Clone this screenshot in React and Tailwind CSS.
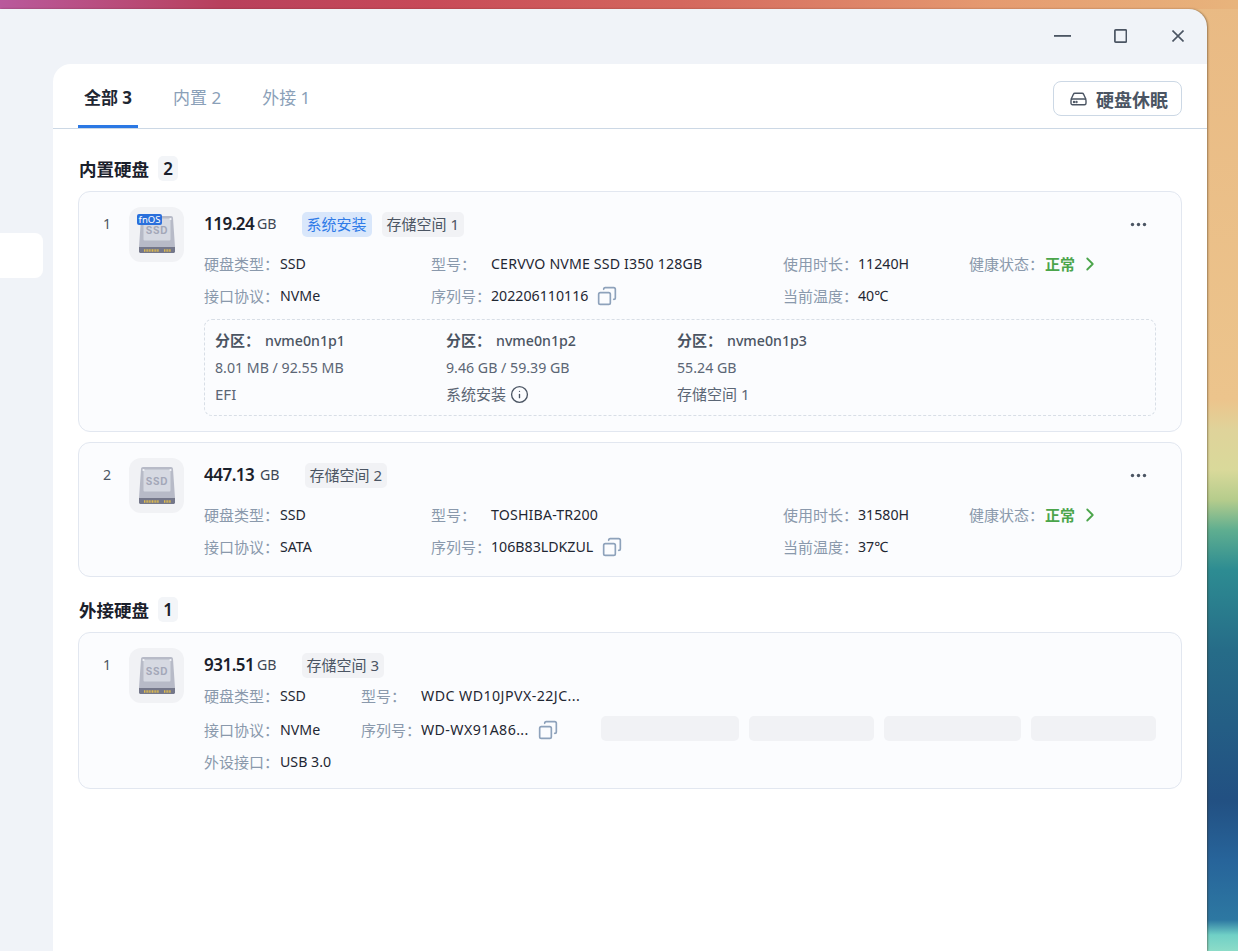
import React from 'react';
import { Copy, Info, ChevronRight } from 'lucide-react';

const SsdIcon = ({ fnos }) => (
  <div className="relative w-[55px] h-[55px] rounded-xl bg-[#f1f2f5] shrink-0 flex items-center justify-center">
    <svg width="36" height="37" viewBox="0 0 36 37">
      <path d="M2 2C2 .9 2.900 0 4 0h28c1.100 0 2 .9 2 2l2 29H0z" fill="#b7bac7" />
      <rect x="4.500" y="2.500" width="27" height="22" rx="1" fill="#d6d9e2" />
      <circle cx="31.500" cy="3" r="1.100" fill="#f2f3f7" />
      <circle cx="4.500" cy="3" r="1.100" fill="#f2f3f7" />
      <text x="18" y="18" textAnchor="middle" fontSize="10" fontWeight="700" fill="#a3a7b8" letterSpacing="0.8" fontFamily="Inter, sans-serif">SSD</text>
      <path d="M0 31h36v4.500c0 .8-.7 1.500-1.500 1.500h-33C.7 37 0 36.300 0 35.500z" fill="#74778a" />
      <path d="M5 34.500h15M25 34.500h7" stroke="#e0bb4c" strokeWidth="2.500" strokeDasharray="1 0.600" fill="none" />
    </svg>
    {fnos && (
      <span className="absolute left-[8px] top-[7px] w-[25px] h-[11px] rounded-[2px] bg-[#2a6fdb] text-white text-[9.5px] leading-[11px] text-center">fnOS</span>
    )}
  </div>
);

const Field = ({ label, value, width, labelWidth, copy, valueClass = '', children }) => (
  <div className="flex items-center shrink-0" style={{ width }}>
    <span className="text-[15px] text-[#8a99ac] shrink-0" style={{ width: labelWidth }}>{label}</span>
    {value && <span className={`text-[#1f2733] whitespace-nowrap ${valueClass}`}>{value}</span>}
    {copy && <Copy size={20} strokeWidth={2} className="ml-[9px] text-[#8ea2bb] scale-x-[-1]" />}
    {children}
  </div>
);

const Tag = ({ children, blue }) => (
  <span className={`h-[25px] px-[5px] rounded-[5px] text-[15px] leading-[25px] ${blue ? 'bg-[#d9e7fb] text-[#2f7be8]' : 'bg-[#f1f2f5] text-[#4b5563]'}`}>
    {children}
  </span>
);

const Health = () => (
  <Field label="健康状态：" labelWidth={76} width={187}>
    <span className="text-[15px] font-bold text-[#4ba54b]">正常</span>
    <ChevronRight size={22} strokeWidth={2} className="ml-[4px] text-[#4ba54b]" />
  </Field>
);

const Dots = () => (
  <svg className="ml-auto mr-[9px]" width="17" height="5" viewBox="0 0 17 5" fill="#4b5563">
    <circle cx="2.500" cy="2.500" r="1.700" />
    <circle cx="8.500" cy="2.500" r="1.700" />
    <circle cx="14.500" cy="2.500" r="1.700" />
  </svg>
);

const Head = ({ size, gb, children, dots = true }) => (
  <div className="flex items-center h-[34px]">
    <span className="w-[49px] text-[17px] tracking-[-0.5px] font-semibold text-[#1a202b] whitespace-nowrap">{size}</span>
    <span className="text-[#3f4855]" style={{ marginLeft: gb }}>GB</span>
    <div className="ml-[25px] flex items-center gap-[10px]">{children}</div>
    {dots && <Dots />}
  </div>
);

const Card = ({ index, fnos, pb, children }) => (
  <div className="flex border border-[#e2e7f0] rounded-xl bg-[#fbfcfe] pt-[15px] pr-[25px]" style={{ paddingBottom: pb }}>
    <div className="w-[50px] h-[34px] pl-[24px] leading-[34px] text-[#4b5563] shrink-0">{index}</div>
    <SsdIcon fnos={fnos} />
    <div className="flex-1 ml-[20px] min-w-0">{children}</div>
  </div>
);

const Section = ({ title, count }) => (
  <div className="flex items-center h-[25px] mb-[10px]">
    <span className="ml-px mt-[2px] text-[17.5px] leading-[25px] font-bold text-[#1a202b]">{title}</span>
    <span className="ml-[9px] w-[20px] h-[25px] rounded-[5px] bg-[#f3f5f8] text-center text-[17px] leading-[25px] font-semibold text-[#1a202b]">{count}</span>
  </div>
);

const Partition = ({ name, used, kind, info }) => (
  <div className="w-[231px] shrink-0">
    <div className="h-[27px] leading-[27px] flex items-center text-[#4b5563]">
      <span className="w-[50px] text-[15px] font-bold">分区：</span>
      <span className="font-medium">{name}</span>
    </div>
    <div className="h-[27px] leading-[27px] text-[#5b6675]">{used}</div>
    <div className="h-[27px] flex items-center text-[15px] text-[#5b6675]">
      {kind}
      {info && <Info size={19} strokeWidth={1.7} className="ml-[4px] text-[#4b5563]" />}
    </div>
  </div>
);

const App = () => (
  <div className="w-[1238px] h-[951px] overflow-hidden flex flex-col text-[14.2px] font-['Noto_Sans','Noto_Sans_CJK_SC',sans-serif] bg-[linear-gradient(to_bottom,#e9ba84_0px,#ecc48c_400px,#dfd39a_430px,#d9d99a_470px,#b5cc8c_500px,#5fae90_530px,#2d8c92_570px,#266c88_650px,#225082_800px,#27649a_860px,#2d78a2_920px,#70d0c6_935px,#8cdcc8_951px)]">
    <div className="h-[9px] shrink-0 bg-[linear-gradient(to_right,#b9599c_0%,#b8405c_18%,#c84a58_35%,#d4685e_55%,#e59a70_80%,#e8b47c_100%)]" />

    <div className="w-[1207px] flex-1 min-h-0 flex flex-col rounded-tr-[18px] bg-[#f0f3f8] shadow-[1px_0_2px_rgba(60,40,20,0.45)]">
      {/* title bar */}
      <div className="h-[55px] shrink-0 flex items-center justify-end pb-[1px] text-[#4b5563]">
        <svg width="17" height="2" viewBox="0 0 17 2" className="mr-[43px]"><rect width="17" height="1.800" fill="currentColor" /></svg>
        <svg width="13" height="14" viewBox="0 0 13 14" className="mr-[45px]"><rect x="0.900" y="0.900" width="11.500" height="12.200" rx="0.800" fill="none" stroke="currentColor" strokeWidth="1.700" /></svg>
        <svg width="12" height="12" viewBox="0 0 12 12" className="mr-[23px]"><path d="M.5.500l11 11M11.500.500l-11 11" fill="none" stroke="currentColor" strokeWidth="1.600" /></svg>
      </div>

      <div className="flex-1 min-h-0 flex">
        {/* collapsed sidebar */}
        <div className="w-[53px] shrink-0 pt-[169px]">
          <div className="w-[43px] h-[45px] bg-white rounded-r-lg" />
        </div>

        <div className="flex-1 bg-white rounded-tl-[18px]">
          {/* tabs */}
          <div className="h-[65px] border-b border-[#ccd8e5] flex px-[25px]">
            <div className="w-[60px] h-[64px] border-b-[3px] border-[#2b78e4] pt-[21px] text-center text-[17px] leading-[25px] font-bold text-[#1f2733]">全部 3</div>
            <div className="ml-[35px] pt-[21px] text-[17px] leading-[25px] text-[#8aa0b8]">内置 2</div>
            <div className="ml-[41px] pt-[21px] text-[17px] leading-[25px] text-[#8aa0b8]">外接 1</div>
            <div className="ml-auto mt-[17px] w-[129px] h-[35px] border border-[#ccd8e5] rounded-lg flex items-center pl-[16px] text-[#4b5563]">
              <svg width="17" height="14" viewBox="0 0 17 14" fill="none" stroke="currentColor" strokeWidth="1.400">
                <path d="M1 7.500L3.400 2.200C3.700 1.500 4.200 1.200 4.900 1.200h7.200c.7 0 1.200.3 1.500 1L16 7.500" />
                <rect x="1" y="7" width="15" height="5.800" rx="1.500" />
                <circle cx="4" cy="10" r="0.500" />
                <circle cx="6.500" cy="10" r="0.500" />
              </svg>
              <span className="ml-[9px] mt-[3px] text-[18px] font-bold">硬盘休眠</span>
            </div>
          </div>

          <div className="px-[25px] pt-[27px]">
            <Section title="内置硬盘" count="2" />
            <div className="flex flex-col gap-[10px]">
              <Card index="1" fnos pb={15}>
                <Head size="119.24" gb={4}>
                  <Tag blue>系统安装</Tag>
                  <Tag>存储空间 1</Tag>
                </Head>
                <div className="mt-[7px] flex h-[32px]">
                  <Field label="硬盘类型：" labelWidth={76} width={227} value="SSD" />
                  <Field label="型号：" labelWidth={60} width={352} value="CERVVO NVME SSD I350 128GB" valueClass="tracking-[0.15px]" />
                  <Field label="使用时长：" labelWidth={75} width={186} value="11240H" />
                  <Health />
                </div>
                <div className="flex h-[32px]">
                  <Field label="接口协议：" labelWidth={76} width={227} value="NVMe" />
                  <Field label="序列号：" labelWidth={60} width={352} value="202206110116" copy />
                  <Field label="当前温度：" labelWidth={75} width={186} value="40℃" />
                </div>
                <div className="mt-[7px] h-[97px] border border-dashed border-[#d8dee6] rounded-lg pl-[10px] pt-[7px] flex">
                  <Partition name="nvme0n1p1" used="8.01 MB / 92.55 MB" kind="EFI" />
                  <Partition name="nvme0n1p2" used="9.46 GB / 59.39 GB" kind="系统安装" info />
                  <Partition name="nvme0n1p3" used="55.24 GB" kind="存储空间 1" />
                </div>
              </Card>

              <Card index="2" pb={13}>
                <Head size="447.13" gb={7}>
                  <Tag>存储空间 2</Tag>
                </Head>
                <div className="mt-[7px] flex h-[32px]">
                  <Field label="硬盘类型：" labelWidth={76} width={227} value="SSD" />
                  <Field label="型号：" labelWidth={60} width={352} value="TOSHIBA-TR200" valueClass="tracking-[0.15px]" />
                  <Field label="使用时长：" labelWidth={75} width={186} value="31580H" />
                  <Health />
                </div>
                <div className="flex h-[32px]">
                  <Field label="接口协议：" labelWidth={76} width={227} value="SATA" />
                  <Field label="序列号：" labelWidth={60} width={352} value="106B83LDKZUL" copy />
                  <Field label="当前温度：" labelWidth={75} width={186} value="37℃" />
                </div>
              </Card>
            </div>

            <div className="mt-[20px]">
              <Section title="外接硬盘" count="1" />
              <Card index="1" pb={10}>
                <Head size="931.51" gb={4} dots={false}>
                  <Tag>存储空间 3</Tag>
                </Head>
                <div className="flex h-[32px] -mt-[2px]">
                  <Field label="硬盘类型：" labelWidth={76} width={157} value="SSD" />
                  <Field label="型号：" labelWidth={60} value="WDC WD10JPVX-22JC..." valueClass="tracking-[0.45px]" />
                </div>
                <div className="mt-[2px] flex h-[32px]">
                  <Field label="接口协议：" labelWidth={76} width={157} value="NVMe" />
                  <Field label="序列号：" labelWidth={60} width={240} value="WD-WX91A86..." valueClass="tracking-[0.4px]" copy />
                  <div className="flex-1 flex gap-[10px] pt-[2px] pb-[5px]">
                    <div className="w-[138px] rounded-[5px] bg-[#f1f2f5]" />
                    <div className="w-[125px] rounded-[5px] bg-[#f1f2f5]" />
                    <div className="w-[137px] rounded-[5px] bg-[#f1f2f5]" />
                    <div className="w-[125px] rounded-[5px] bg-[#f1f2f5]" />
                  </div>
                </div>
                <div className="flex h-[32px]">
                  <Field label="外设接口：" labelWidth={76} value="USB 3.0" />
                </div>
              </Card>
            </div>
          </div>
        </div>
      </div>
    </div>
  </div>
);

export default App;
